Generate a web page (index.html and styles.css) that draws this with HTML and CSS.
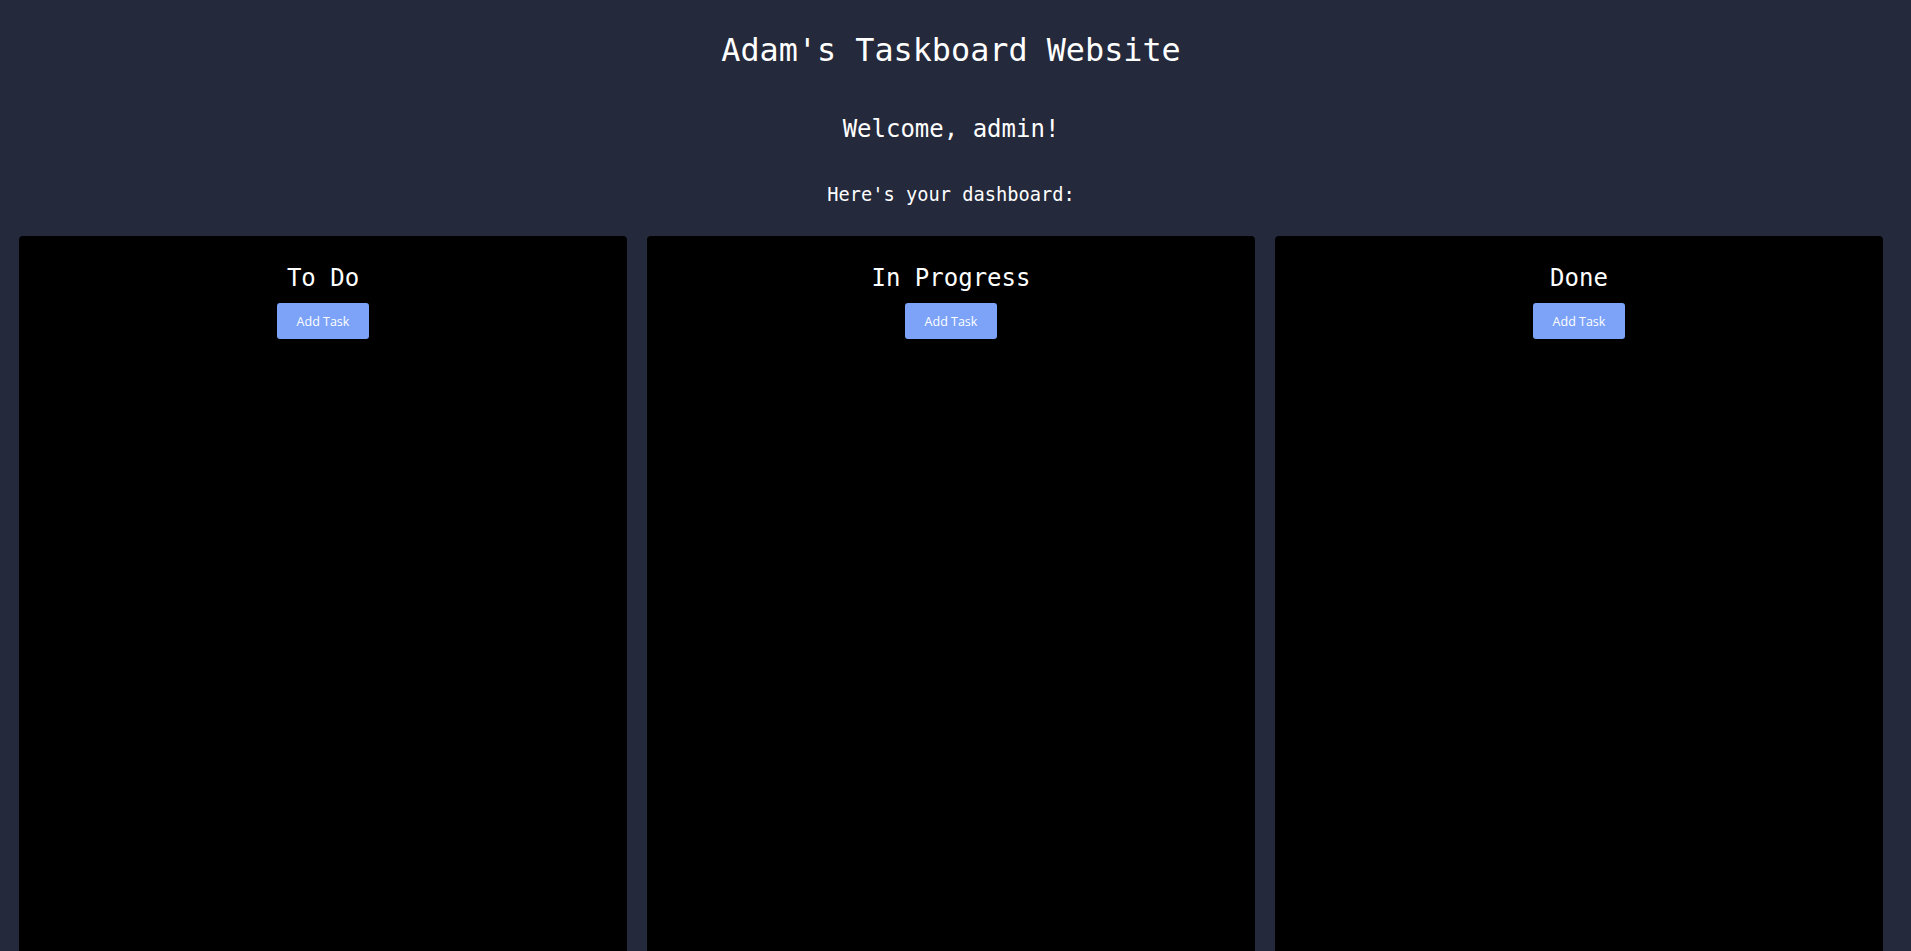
FILE: index.html
```html
<!DOCTYPE html>
<html lang="en">
<head>
<meta charset="utf-8">
<title>Adam's Taskboard Website</title>
<link rel="stylesheet" href="styles.css">
</head>
<body>
<div class="page">
  <header class="header">
    <h1 class="title">Adam's Taskboard Website</h1>
    <h2 class="welcome">Welcome, admin!</h2>
    <h3 class="subtitle">Here's your dashboard:</h3>
  </header>
  <main class="board">
    <section class="column">
      <h2 class="column-title">To Do</h2>
      <button class="add-btn" type="button">Add Task</button>
    </section>
    <section class="column">
      <h2 class="column-title">In Progress</h2>
      <button class="add-btn" type="button">Add Task</button>
    </section>
    <section class="column">
      <h2 class="column-title">Done</h2>
      <button class="add-btn" type="button">Add Task</button>
    </section>
  </main>
</div>
</body>
</html>
```

FILE: styles.css
```css
html, body {
  margin: 0;
  padding: 0;
  height: 100%;
  overflow: hidden;
  background: #24293b;
}

body {
  color: #ffffff;
  font-family: "DejaVu Sans Mono", "Liberation Mono", monospace;
}

.page {
  width: 1864px;
  margin-left: 19px;
  display: flex;
  flex-direction: column;
}

.header {
  display: flex;
  flex-direction: column;
  align-items: center;
  padding-top: 30px;
}

.title {
  margin: 0;
  font-size: 31.8px;
  line-height: 40px;
  font-weight: normal;
}

.welcome {
  margin: 44px 0 0;
  font-size: 24px;
  line-height: 30px;
  font-weight: normal;
}

.subtitle {
  margin: 39px 0 0;
  font-size: 18.7px;
  line-height: 24px;
  font-weight: normal;
}

.board {
  margin-top: 29px;
  display: grid;
  grid-template-columns: repeat(3, 1fr);
  gap: 20px;
}

.column {
  background: #000000;
  border-radius: 4px;
  min-height: 780px;
  display: flex;
  flex-direction: column;
  align-items: center;
  padding-top: 27px;
}

.column-title {
  margin: 0;
  font-size: 24px;
  line-height: 30px;
  font-weight: normal;
}

.add-btn {
  margin-top: 10px;
  width: 92px;
  height: 36px;
  border: none;
  border-radius: 3px;
  background: #7ca3f8;
  color: #ffffff;
  font-family: "Open Sans", "Noto Sans", sans-serif;
  font-size: 12.5px;
  padding: 0;
  cursor: pointer;
}
```
